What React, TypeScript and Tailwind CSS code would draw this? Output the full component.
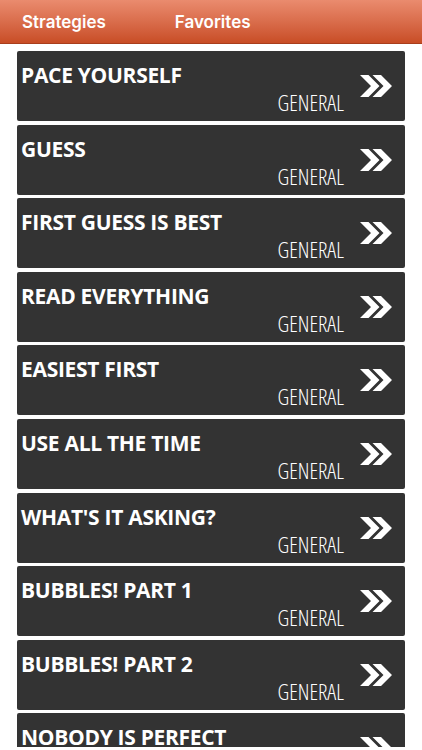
import React from "react";

const items = [
    "PACE YOURSELF",
    "GUESS",
    "FIRST GUESS IS BEST",
    "READ EVERYTHING",
    "EASIEST FIRST",
    "USE ALL THE TIME",
    "WHAT'S IT ASKING?",
    "BUBBLES! PART 1",
    "BUBBLES! PART 2",
    "NOBODY IS PERFECT",
];

const DoubleChevron = () => (
    <svg width="32" height="22" viewBox="0 0 32 22" className="shrink-0">
        <polygon points="0,0 8.5,0 19.5,11 8.5,22 0,22 11,11" fill="#ffffff" />
        <polygon points="12.5,0 21,0 32,11 21,22 12.5,22 23.5,11" fill="#ffffff" />
    </svg>
);

const App = () => {
    return (
        <div className="w-[422px] h-[750px] bg-white overflow-hidden flex flex-col">
            {/* Top tabs */}
            <header className="h-[44px] shrink-0 bg-gradient-to-b from-[#ea8b6e] to-[#c84d25] border-b border-[#a83e1c] flex items-center pt-[3px] px-[22px] gap-[69px] font-['Inter',sans-serif]">
                <span className="text-white text-[17px] font-semibold">Strategies</span>
                <span className="text-white text-[17px] font-semibold">Favorites</span>
            </header>

            {/* Strategy list */}
            <div className="h-[703px] overflow-hidden px-[17px] pt-[7px] flex flex-col gap-[3.6px]">
                {items.map((title) => (
                    <div
                        key={title}
                        className="h-[70px] shrink-0 bg-[#333333] rounded-[2px] flex items-center pl-[4px] pr-[13px]"
                    >
                        <div className="flex-1 h-full flex flex-col">
                            <div className="text-white text-[21px] font-bold leading-[28px] mt-[10px] font-['Open_Sans',sans-serif] tracking-[-0.3px]">
                                {title}
                            </div>
                            <div className="text-white text-[22px] font-[350] leading-[26px] self-end mr-[16px] font-['Open_Sans',sans-serif] [font-stretch:75%]">
                                GENERAL
                            </div>
                        </div>
                        <DoubleChevron />
                    </div>
                ))}
            </div>
        </div>
    );
};

export default App;
